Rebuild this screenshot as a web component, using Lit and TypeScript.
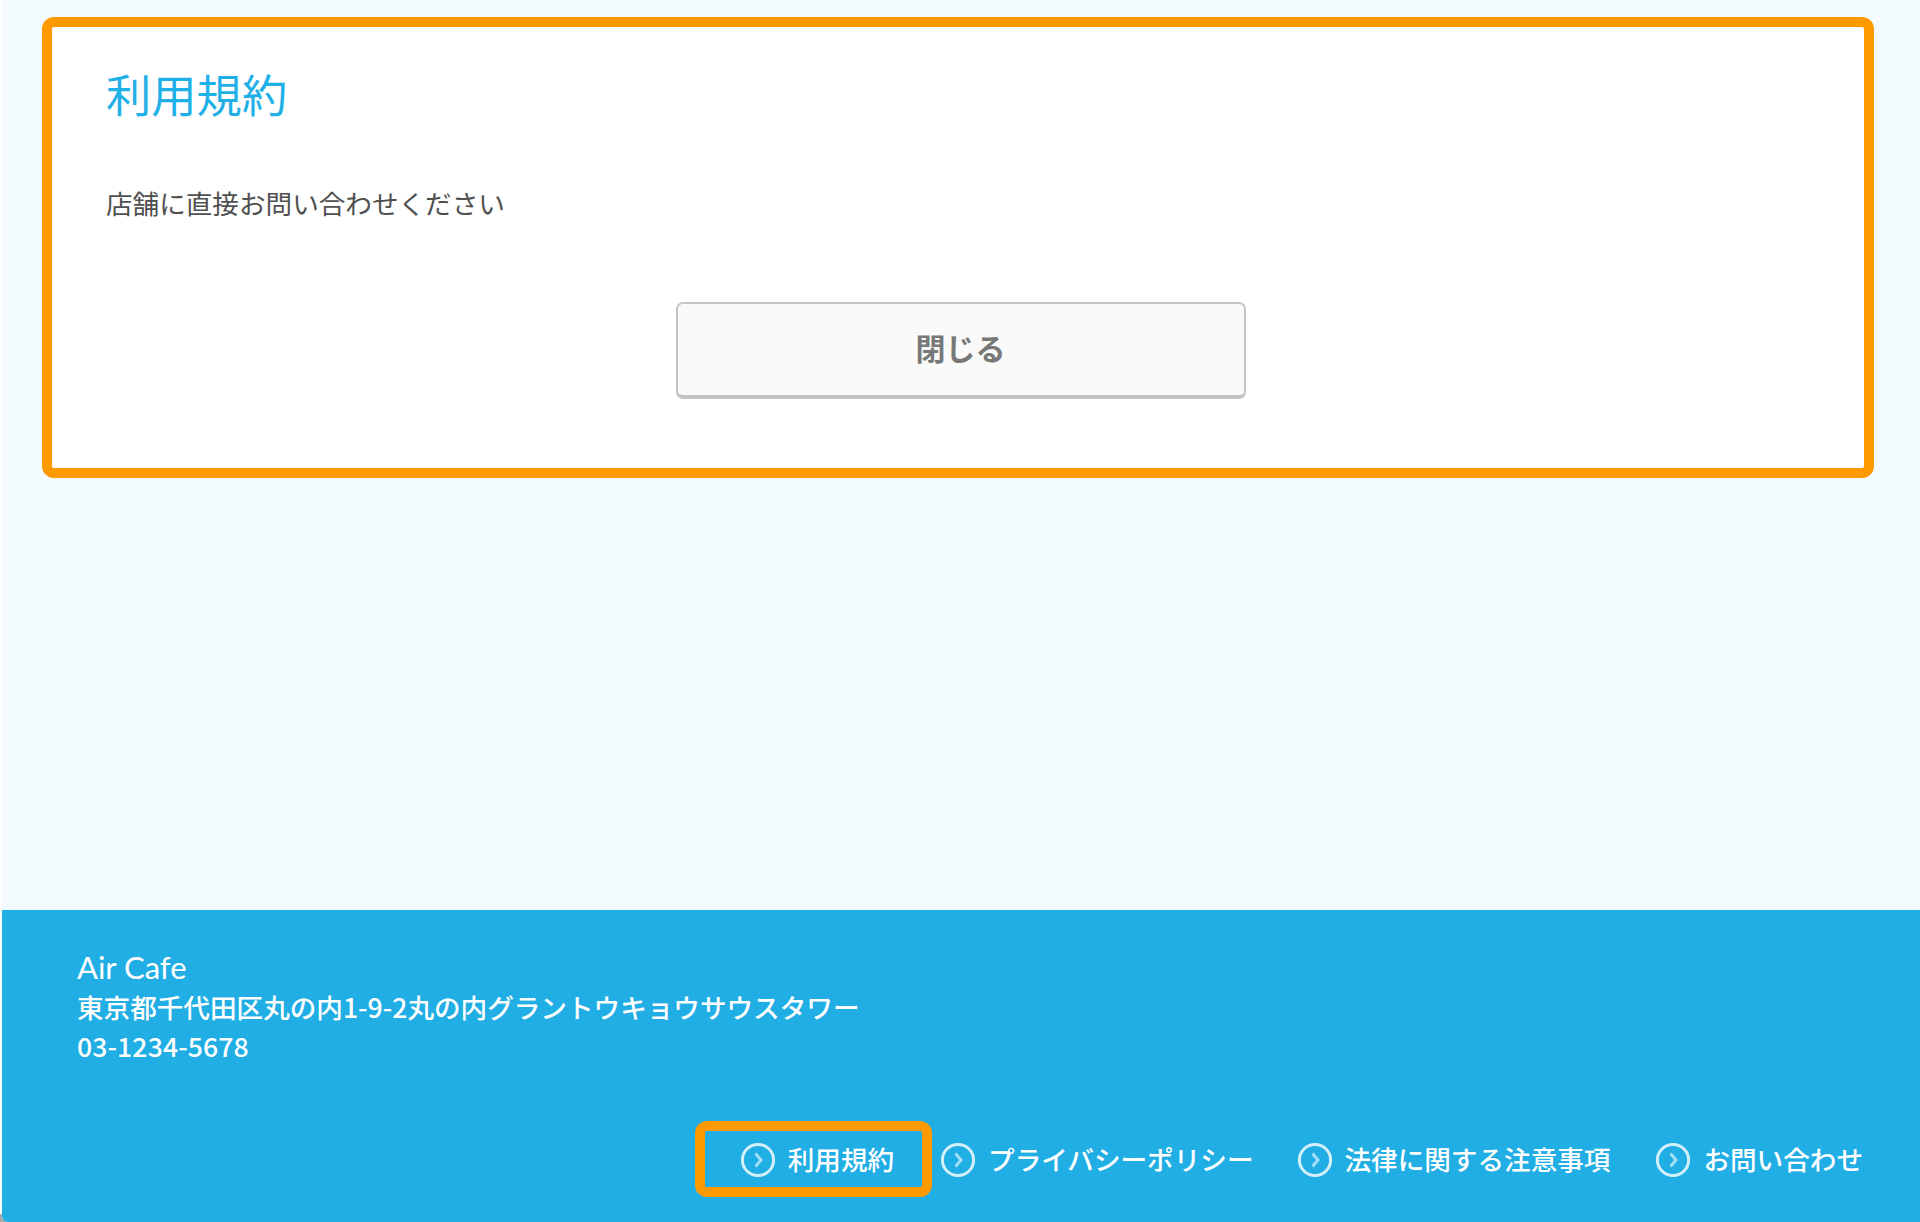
import { LitElement, html, css } from "lit";
import { customElement } from "lit/decorators.js";

const LINKS: [string, string][] = [
  ["利用規約", "current"],
  ["プライバシーポリシー", "second"],
  ["法律に関する注意事項", "third"],
  ["お問い合わせ", "fourth"],
];

@customElement("app-root")
export class AppRoot extends LitElement {
  static styles = css`
    :host {
      display: block;
      font-family: "Noto Sans CJK JP", "Noto Sans", sans-serif;
      background: linear-gradient(#fff 1214px, #a8a8a8 1214px);
    }
    .page {
      box-sizing: border-box;
      height: 1222px;
      margin-left: 2px;
      display: flex;
      flex-direction: column;
      background: #f3fbff;
      overflow: hidden;
      border-bottom-left-radius: 6px;
    }
    .main {
      flex: 1;
      box-sizing: border-box;
      padding: 17px 46px 0 40px;
    }
    .card {
      box-sizing: border-box;
      height: 461px;
      background: #fff;
      border: 10px solid #ff9900;
      border-radius: 12px;
      padding: 33px 49px 0 54px;
    }
    h1 {
      margin: 0;
      font-size: 45.3px;
      line-height: 66px;
      font-weight: 400;
      color: #1fb0e8;
    }
    p {
      margin: 57px 0 0;
      font-size: 26.6px;
      line-height: 40px;
      color: #505050;
    }
    .close {
      display: flex;
      align-items: center;
      justify-content: center;
      box-sizing: border-box;
      width: 570px;
      height: 97px;
      margin: 79px auto 0;
      padding: 0 0 5px 0;
      background: #fafafa;
      border: 2px solid #c4c4c4;
      border-bottom-width: 4px;
      border-radius: 7px;
      font-family: inherit;
      font-size: 30px;
      font-weight: 700;
      color: #787878;
    }
    footer {
      height: 312px;
      box-sizing: border-box;
      background: #20aee5;
      color: #fff;
      padding: 37px 57px 0 75px;
      display: flex;
      flex-direction: column;
    }
    .info {
      font-size: 26.6px;
      line-height: 40px;
      font-weight: 500;
    }
    .name {
      font-family: "Lato", "Noto Sans CJK JP", sans-serif;
      font-size: 31px;
      font-weight: 400;
    }
    .tel {
      letter-spacing: 0.1px;
      margin-top: -1px;
    }
    nav {
      display: flex;
      justify-content: flex-end;
      margin-top: 55px;
    }
    a {
      display: flex;
      align-items: center;
      gap: 12px;
      height: 76px;
      box-sizing: border-box;
      font-size: 26.6px;
      font-weight: 500;
      color: #fff;
    }
    a span {
      margin-bottom: 2px;
    }
    a.current {
      border: 10px solid #ff9900;
      border-radius: 12px;
      padding: 0 28px 0 35px;
    }
    a.second { margin-left: 8px; }
    a.third { margin-left: 43px; }
    a.fourth { margin-left: 45px; }
    svg { flex: none; display: block; margin-top: 2px; }
  `;

  private icon() {
    return html`<svg width="36" height="36" viewBox="0 0 36 36" fill="none">
      <circle cx="18" cy="18" r="15.6" stroke="#fff" stroke-opacity=".8" stroke-width="3" />
      <path d="M15.5 11.5 21 18 15.5 24.5" stroke="#cdeefb" stroke-opacity=".75" stroke-width="3" />
    </svg>`;
  }

  render() {
    return html`<div class="page">
      <main class="main">
        <section class="card">
          <h1>利用規約</h1>
          <p>店舗に直接お問い合わせください</p>
          <button class="close">閉じる</button>
        </section>
      </main>
      <footer>
        <div class="info">
          <div class="name">Air Cafe</div>
          <div>東京都千代田区丸の内1-9-2丸の内グラントウキョウサウスタワー</div>
          <div class="tel">03-1234-5678</div>
        </div>
        <nav>
          ${LINKS.map(([t, c]) => html`<a class=${c}>${this.icon()}<span>${t}</span></a>`)}
        </nav>
      </footer>
    </div>`;
  }
}
